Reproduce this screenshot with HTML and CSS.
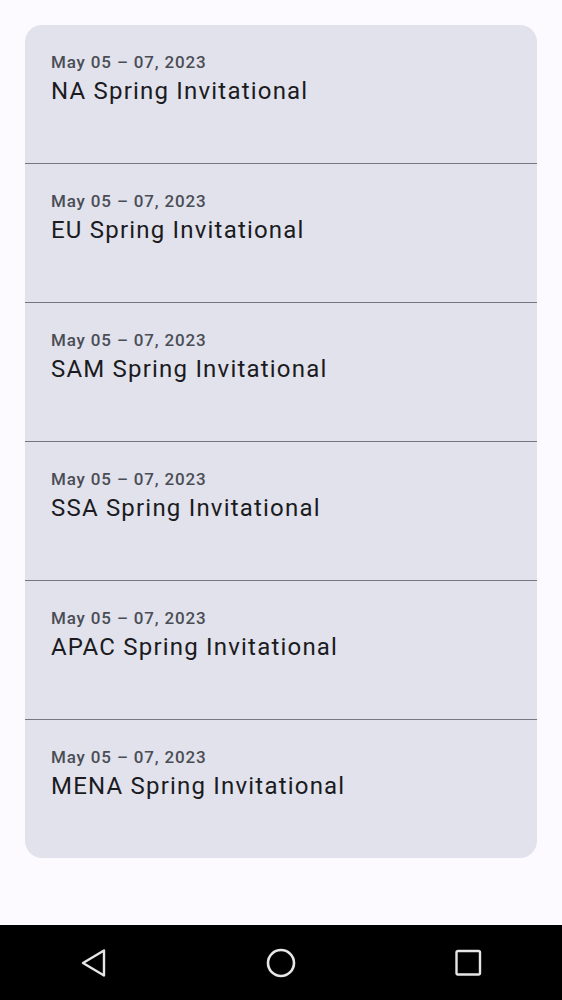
FILE: index.html
```html
<!DOCTYPE html>
<html>
<head>
<meta charset="utf-8">
<link rel="stylesheet" href="styles.css">
</head>
<body>
<div class="screen">
  <main class="content">
    <div class="card">
      <div class="item"><div class="date">May 05 – 07, 2023</div><div class="title">NA Spring Invitational</div></div>
      <div class="divider"></div>
      <div class="item"><div class="date">May 05 – 07, 2023</div><div class="title">EU Spring Invitational</div></div>
      <div class="divider"></div>
      <div class="item"><div class="date">May 05 – 07, 2023</div><div class="title">SAM Spring Invitational</div></div>
      <div class="divider"></div>
      <div class="item"><div class="date">May 05 – 07, 2023</div><div class="title">SSA Spring Invitational</div></div>
      <div class="divider"></div>
      <div class="item"><div class="date">May 05 – 07, 2023</div><div class="title">APAC Spring Invitational</div></div>
      <div class="divider"></div>
      <div class="item"><div class="date">May 05 – 07, 2023</div><div class="title">MENA Spring Invitational</div></div>
    </div>
  </main>
  <nav class="navbar">
    <svg class="nav-icon" width="28" height="32" viewBox="0 0 28 32"><path d="M24 3.5 L3 16 L24 28.5 Z" fill="none" stroke="#e6e6e6" stroke-width="2.4" stroke-linejoin="round"/></svg>
    <svg class="nav-icon" width="32" height="32" viewBox="0 0 32 32"><circle cx="16" cy="16" r="13" fill="none" stroke="#e6e6e6" stroke-width="2.6"/></svg>
    <svg class="nav-icon" width="28" height="28" viewBox="0 0 28 28"><rect x="2.5" y="2" width="23.5" height="23.5" rx="1.5" fill="none" stroke="#e6e6e6" stroke-width="2.4"/></svg>
  </nav>
</div>
</body>
</html>
```
FILE: styles.css
```css
html, body {
  margin: 0;
  padding: 0;
}
body {
  background: #fcfaff;
  font-family: Roboto, "Noto Sans", sans-serif;
}
.screen {
  width: 562px;
  height: 1000px;
  display: flex;
  flex-direction: column;
}
.content {
  flex: 1;
  padding: 25px 25px 0 25px;
}
.card {
  background: #e1e2ec;
  border-radius: 17px;
  overflow: hidden;
  display: flex;
  flex-direction: column;
}
.item {
  height: 138px;
  box-sizing: border-box;
  padding: 26px 26px 0 26px;
  display: flex;
  flex-direction: column;
}
.divider {
  height: 1px;
  background: #74777f;
}
.date {
  font-size: 17px;
  line-height: 22px;
  letter-spacing: 0.85px;
  color: #4b4d55;
  font-weight: 500;
}
.title {
  font-size: 24px;
  line-height: 30px;
  letter-spacing: 1.2px;
  color: #1b1b21;
  margin-top: 3px;
}
.navbar {
  height: 75px;
  background: #000;
  display: flex;
  align-items: center;
  justify-content: space-between;
  padding: 0 80px 0 80px;
}
```
